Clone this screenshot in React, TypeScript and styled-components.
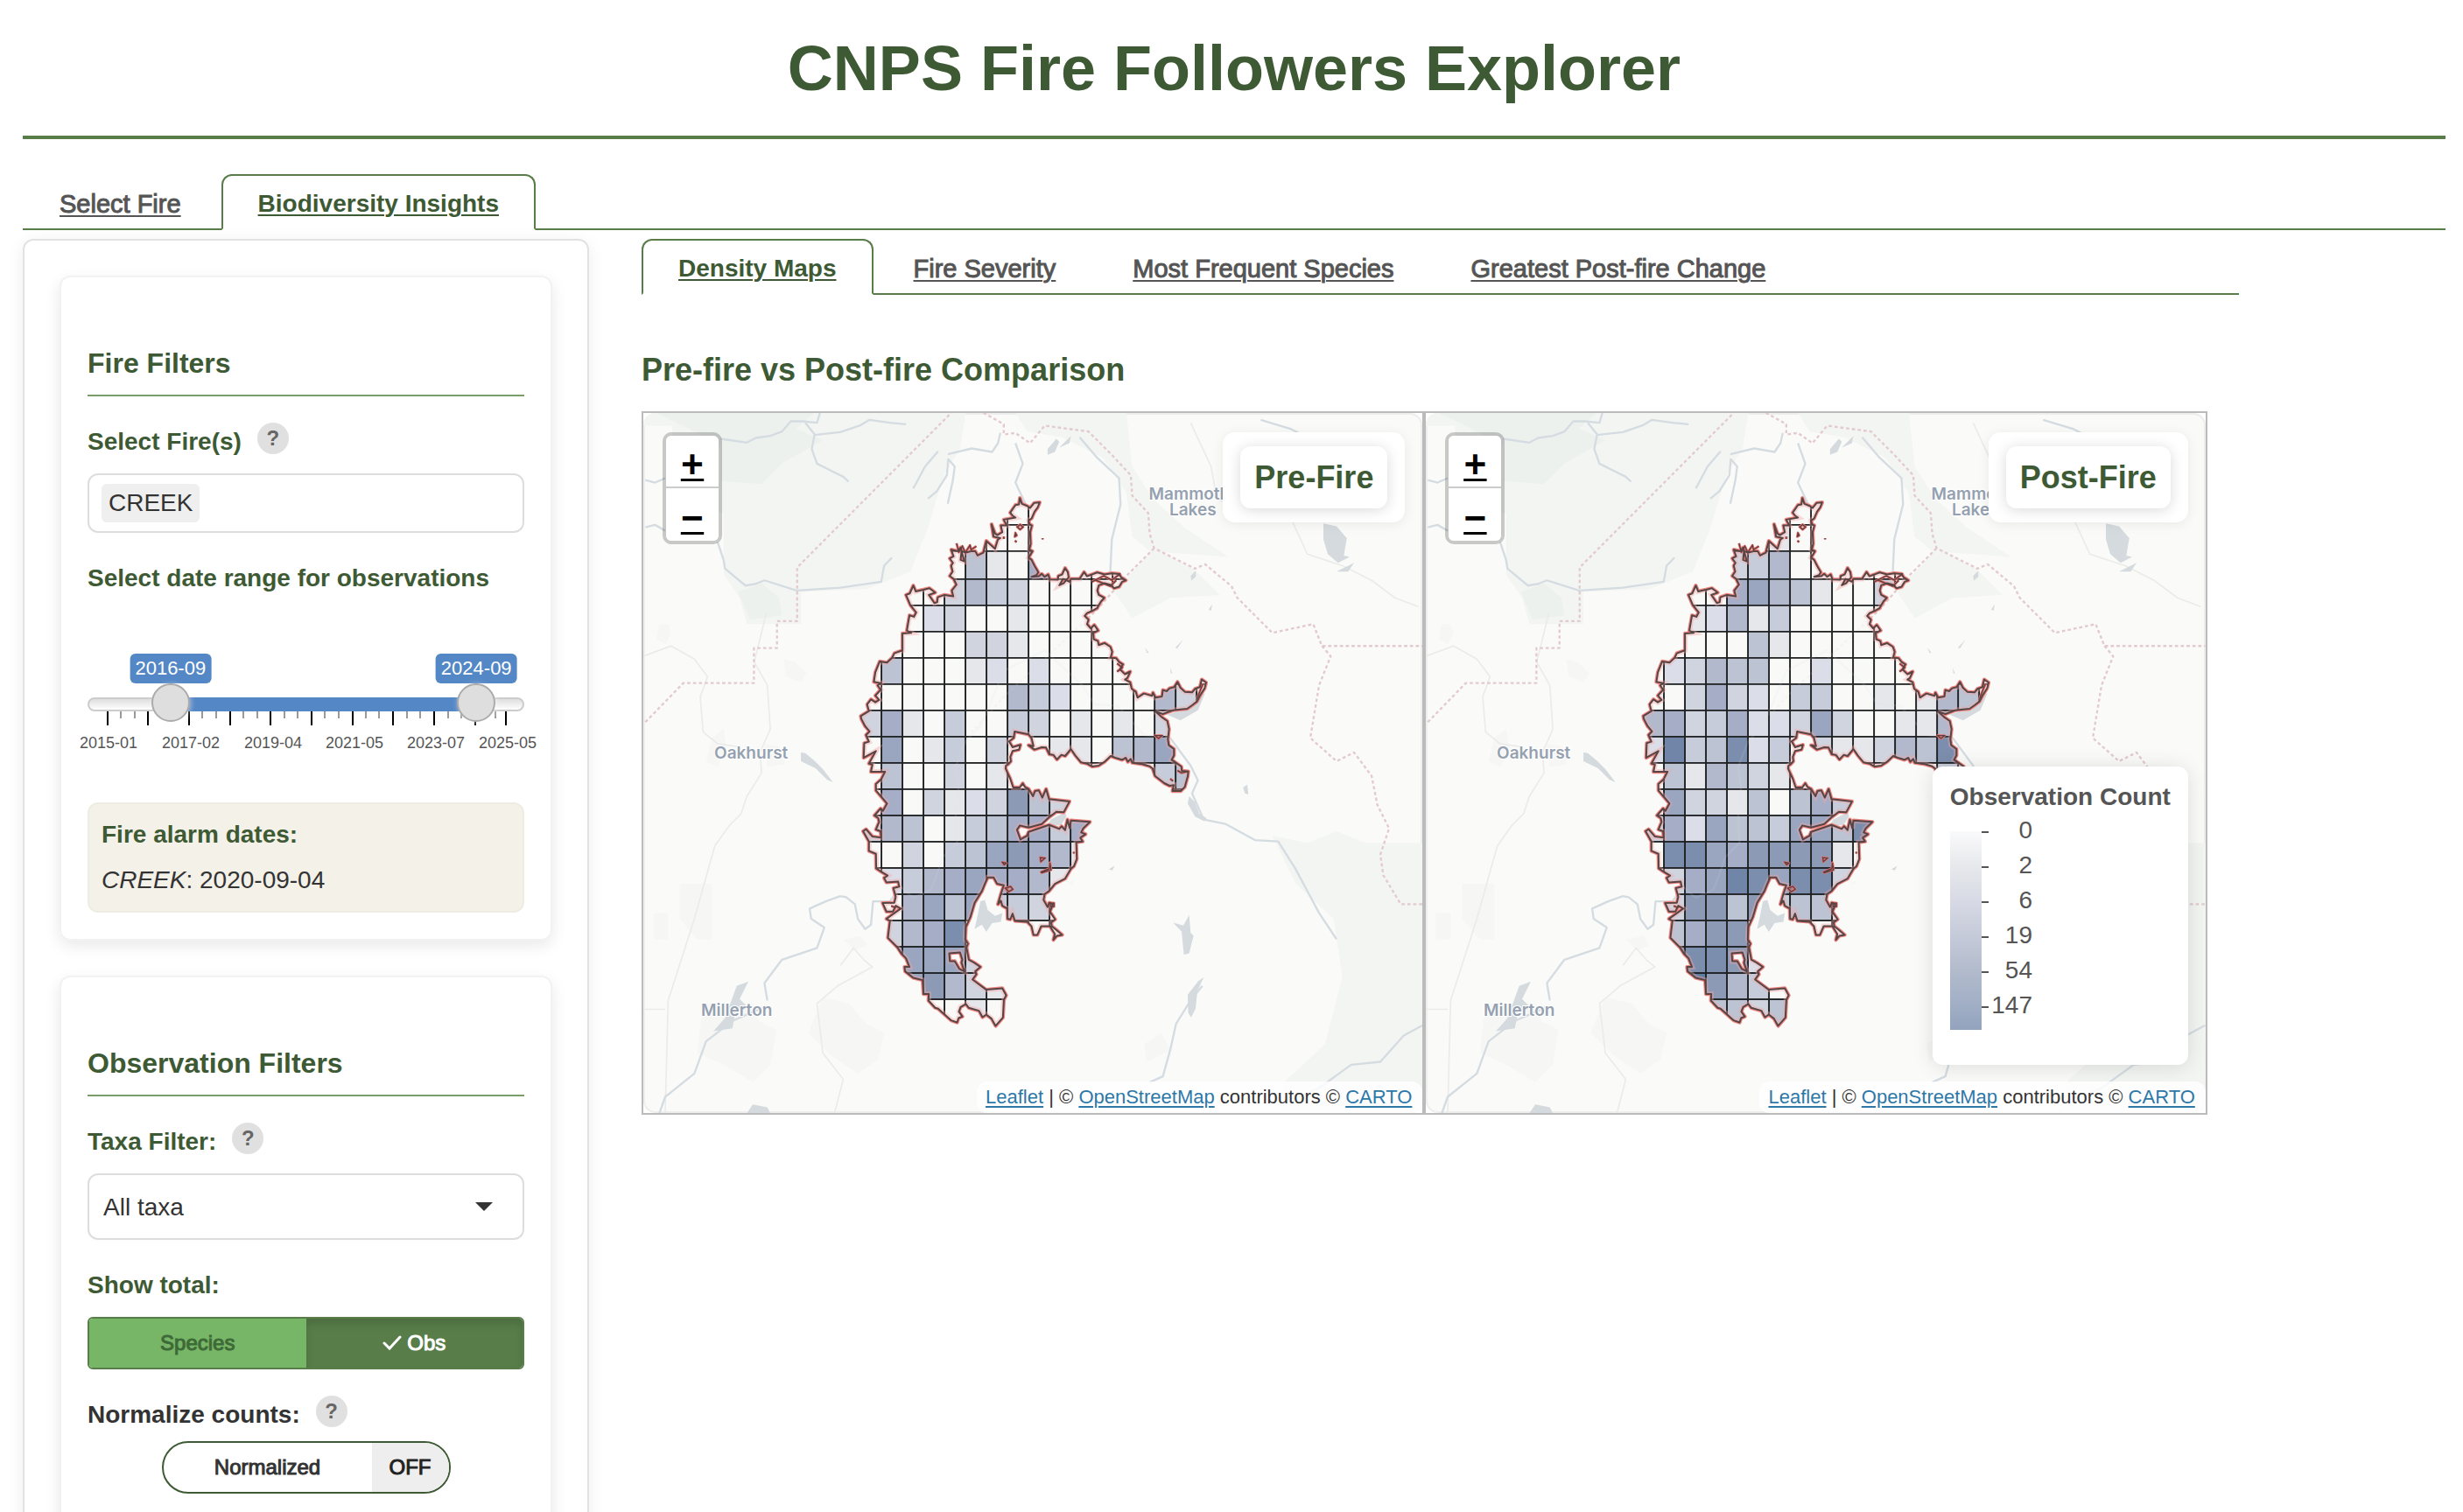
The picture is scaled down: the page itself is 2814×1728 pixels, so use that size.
import React, { useId, useState } from "react";
import styled, { createGlobalStyle } from "styled-components";

const DARK = "#3d5a34";
const MID = "#587d49";
const INK = "#333333";
const GREY = "#555555";

const GlobalStyle = createGlobalStyle`
  *, *::before, *::after { box-sizing: border-box; }
  body {
    margin: 0;
    background: #fff;
    color: ${INK};
    font-family: "Liberation Sans", Arial, Helvetica, sans-serif;
    font-size: 28px;
  }
  h1, h2, p { margin: 0; }
  button, input, select { font: inherit; color: inherit; }
`;

/* ---------- Page frame ---------- */

const Page = styled.div`
  height: 100vh;
  overflow-x: hidden;
  overflow-y: auto;
  scrollbar-width: none;
  padding: 38px 20px 0 26px;
  display: flex;
  flex-direction: column;
`;

const PageHeader = styled.header`
  flex: none;
  padding-bottom: 37px;
  border-bottom: 4px solid ${MID};
  margin-bottom: 40px;
  text-align: center;
`;

const PageTitle = styled.h1`
  font-size: 72px;
  line-height: 80px;
  color: ${DARK};
`;

const Tabs = styled.nav`
  flex: none;
  display: flex;
  gap: 4px;
  border-bottom: 2px solid ${MID};
`;

const Tab = styled.a<{ $active?: boolean }>`
  margin-bottom: -2px;
  padding: 12px 40px 8px;
  border: 2px solid ${(p) => (p.$active ? MID : "transparent")};
  border-bottom-color: ${(p) => (p.$active ? "#fff" : "transparent")};
  border-radius: 12px 12px 0 0;
  font-size: ${(p) => (p.$active ? "28px" : "29px")};
  line-height: 40px;
  font-weight: ${(p) => (p.$active ? 700 : 400)};
  -webkit-text-stroke: ${(p) => (p.$active ? "0" : "1px currentColor")};
  paint-order: stroke;
  color: ${(p) => (p.$active ? DARK : GREY)};
  text-decoration: underline;
  text-decoration-thickness: 2px;
  text-underline-offset: 3px;
  white-space: nowrap;
`;

const Columns = styled.div`
  flex: 1 0 auto;
  display: flex;
  align-items: flex-start;
  margin: 10px -30px 0;
`;

const SideColumn = styled.div`
  flex: 0 0 25%;
  min-width: 0;
  max-width: 25%;
  padding: 0 30px;
`;

const MainColumn = styled.main`
  flex: 0 0 66.6667%;
  min-width: 0;
  padding: 0 30px;
`;

/* ---------- Sidebar ---------- */

const Sidebar = styled.aside`
  padding: 40px 40px 60px;
  border: 2px solid #e2e2e2;
  border-radius: 12px;
  box-shadow: 0 4px 20px rgba(0, 0, 0, 0.07);
`;

const Card = styled.section`
  padding: 80px 30px 30px;
  border: 2px solid #f2f2f2;
  border-radius: 12px;
  box-shadow: 0 6px 18px rgba(0, 0, 0, 0.09);
  & + & { margin-top: 40px; padding-bottom: 100px; }
`;

const CardTitle = styled.h2`
  padding-bottom: 18px;
  margin-bottom: 30px;
  border-bottom: 2px solid #7a9e6b;
  font-size: 32px;
  line-height: 36px;
  color: ${DARK};
`;

const Field = styled.div`
  & + & { margin-top: 30px; }
`;

const FieldHead = styled.div<{ $tight?: boolean }>`
  display: flex;
  align-items: flex-start;
  gap: 18px;
  margin-bottom: ${(p) => (p.$tight ? "10px" : "16px")};
`;

const FieldLabel = styled.label<{ $plain?: boolean }>`
  display: block;
  padding-top: 2px;
  line-height: 40px;
  font-weight: 700;
  color: ${(p) => (p.$plain ? INK : DARK)};
`;

const Help = styled.button`
  width: 36px;
  height: 36px;
  padding: 0;
  border: 0;
  border-radius: 50%;
  background: #e0e0e0;
  color: #666;
  font-size: 24px;
  line-height: 36px;
  font-weight: 700;
`;

const TagBox = styled.div`
  display: flex;
  align-items: center;
  height: 68px;
  padding: 0 14px;
  border: 2px solid #dddddd;
  border-radius: 12px;
`;

const Tag = styled.span`
  padding: 0 8px;
  border-radius: 6px;
  background: #efefef;
  line-height: 44px;
`;

const TagInput = styled.input`
  flex: 1;
  min-width: 0;
  border: 0;
  outline: 0;
  background: none;
`;

const SelectWrap = styled.div`
  display: grid;
  align-items: center;
  > * { grid-area: 1 / 1; }
  > svg { justify-self: end; margin-right: 36px; pointer-events: none; }
`;

const Select = styled.select`
  appearance: none;
  width: 100%;
  height: 76px;
  padding: 0 16px;
  border: 2px solid #dddddd;
  border-radius: 12px;
  background: #fff;
`;

/* ---------- Date slider ---------- */

const Slider = styled.div`
  position: relative;
  margin-top: 66px;
  padding-top: 34px;
`;

const Bubble = styled.span`
  position: absolute;
  top: 0;
  transform: translateX(-50%);
  padding: 0 6px;
  border-radius: 6px;
  background: #5487c5;
  color: #fff;
  font-size: 22px;
  line-height: 34px;
  white-space: nowrap;
`;

const Rail = styled.div`
  display: grid;
  grid-template-columns: minmax(0, 1fr);
  align-items: center;
  height: 44px;
  > * { grid-area: 1 / 1; }
`;

const Track = styled.div`
  height: 16px;
  border: 2px solid #cccccc;
  border-radius: 16px;
  background: linear-gradient(#dedede, #ffffff);
  margin-top: 4px;
`;

const Span = styled.div`
  height: 16px;
  background: #5487c5;
  margin-top: 4px;
`;

const Range = styled.input`
  appearance: none;
  width: 100%;
  height: 44px;
  margin: 0;
  background: none;
  pointer-events: none;
  z-index: 1;
  &::-webkit-slider-thumb {
    appearance: none;
    width: 44px;
    height: 44px;
    border: 2px solid #ababab;
    border-radius: 50%;
    background: #dedede;
    box-shadow: 1px 1px 6px rgba(255, 255, 255, 0.5);
    pointer-events: auto;
  }
`;

const Scale = styled.svg`
  display: block;
  width: 100%;
  height: 48px;
  margin-top: -12px;
  margin-bottom: 56px;
  overflow: visible;
  text { font-size: 18px; fill: ${GREY}; text-anchor: middle; }
`;

const AlarmBox = styled.div`
  display: flex;
  flex-direction: column;
  gap: 12px;
  padding: 15px 14px;
  border: 2px solid #efece2;
  border-radius: 12px;
  background: #f4f1e9;
  line-height: 40px;
  strong { color: ${DARK}; }
`;

/* ---------- Buttons ---------- */

const Segments = styled.div`
  display: flex;
  height: 60px;
  border: 2px solid ${MID};
  border-radius: 6px;
  overflow: hidden;
`;

const Segment = styled.label<{ $on?: boolean }>`
  flex: 1;
  display: flex;
  align-items: center;
  justify-content: center;
  gap: 6px;
  font-size: 24px;
  -webkit-text-stroke: 1px currentColor;
  background: ${(p) => (p.$on ? MID : "#78b667")};
  color: ${(p) => (p.$on ? "#fff" : "#3d6a36")};
  box-shadow: ${(p) => (p.$on ? "inset 0 6px 10px rgba(0, 0, 0, 0.13)" : "none")};
  input { position: absolute; opacity: 0; }
`;

const Toggle = styled.label`
  display: flex;
  width: 330px;
  height: 60px;
  margin: 0 auto;
  border: 2px solid ${DARK};
  border-radius: 30px;
  overflow: hidden;
  font-size: 24px;
  line-height: 56px;
  text-align: center;
  -webkit-text-stroke: 1px currentColor;
  input { position: absolute; opacity: 0; }
`;

const ToggleName = styled.span`
  flex: 1;
`;

const ToggleState = styled.span`
  width: 88px;
  background: #eeeeee;
  color: #222;
`;

/* ---------- Maps ---------- */

const SectionTitle = styled.h2`
  margin: 66px 0 27px;
  font-size: 36px;
  line-height: 40px;
  color: ${DARK};
`;

const MapPair = styled.div`
  display: flex;
`;

const MapFrame = styled.div`
  flex: 0 0 49%;
  height: 804px;
  border: 2px solid #bbbbbb;
`;

const MapCanvas = styled.div`
  position: relative;
  height: 100%;
  border-radius: 14px;
  overflow: hidden;
  background: #fafaf8;
  box-shadow: inset 0 0 0 2px #eeeeee;
`;

const MapSvg = styled.svg`
  display: block;
  width: 100%;
  height: 100%;
`;

const ZoomBar = styled.div`
  position: absolute;
  top: 22px;
  left: 22px;
  width: 68px;
  border: 4px solid rgba(0, 0, 0, 0.2);
  border-radius: 10px;
  background-clip: padding-box;
  overflow: hidden;
`;

const ZoomButton = styled.button`
  display: block;
  width: 60px;
  height: 60px;
  padding: 14px 0 0;
  border: 0;
  background: #fff;
  color: #000;
  font-family: "Liberation Mono", monospace;
  font-size: 44px;
  line-height: 44px;
  font-weight: 700;
  text-decoration: underline;
  text-decoration-thickness: 3px;
  text-underline-offset: 1px;
  text-decoration-skip-ink: none;
  &:first-child { border-bottom: 2px solid #cccccc; }
`;

const Badge = styled.div`
  position: absolute;
  top: 22px;
  right: 20px;
  padding: 16px 20px;
  border-radius: 14px;
  background: #fff;
  box-shadow: 0 2px 14px rgba(0, 0, 0, 0.07);
`;

const BadgeText = styled.div`
  padding: 16px;
  border-radius: 12px;
  background: #fff;
  box-shadow: 0 2px 16px rgba(0, 0, 0, 0.15);
  font-size: 36px;
  line-height: 39px;
  font-weight: 700;
  color: ${DARK};
`;

const Legend = styled.div`
  position: absolute;
  right: 20px;
  bottom: 55px;
  padding: 18px 20px 34px;
  border-radius: 12px;
  background: #fff;
  box-shadow: 0 2px 24px rgba(0, 0, 0, 0.12);
  color: ${GREY};
  strong { display: block; line-height: 34px; }
  svg { display: block; overflow: visible; }
  text { font-size: 28px; fill: ${GREY}; text-anchor: end; }
`;

const Attribution = styled.div`
  position: absolute;
  right: 0;
  bottom: 0;
  padding: 0 12px 0 10px;
  border-radius: 12px;
  background: rgba(255, 255, 255, 0.8);
  font-size: 22px;
  line-height: 36px;
  a { color: #2e78a8; text-underline-offset: 3px; }
`;

/* Shades of the density ramp, lowest first. */
const RAMP: Record<string, string> = {
  "0": "#f9f9f7", "1": "#e6e7eb", "2": "#dbdee8", "3": "#d0d4df",
  "4": "#c6ccd9", "5": "#bcc3d2", "6": "#b2b9cd", "7": "#a5afc6",
  "8": "#9aa5c0", "9": "#8c9ab7", A: "#7d8fae", B: "#7086a8", C: "#5f7fa0",
};

/* One string per grid row, one character per column. */
const PRE_ROWS = [
  "00000000000000000", "00000000000000000", "00000510700000000", "00003643000000000",
  "00023001000000000", "00000331000000000", "05000120200000000", "00000006420000630",
  "37104004301010300", "08014030011056800", "05003010000000450", "07031239530000000",
  "36501457747000000", "00304589761000000", "02467877610000000", "00685844300000000",
  "0367A000000000000", "08888300000000000", "08896310000000000", "00000100000000000",
];
const POST_ROWS = [
  "00000000000000000", "00000010000000000", "00003460000000000", "00007865100300000",
  "00126140000000000", "00000510000000000", "02365500200000000", "00373204400101650",
  "67347223830011600", "2B45A240311365A00", "05165310000000450", "08331505740000000",
  "3728554885A000000", "0AA87999910000000", "0378BA8AA30000000", "03995945510000000",
  "05799000000000000", "0AAA9200000000000", "0AC96400000000000", "00055350000000000",
];

const rowY = (n: number) => (n < 3 ? [60, 150, 240][n] : 336 + 90 * (n - 3));
const colX = (k: number) => 141 + 72 * (k - 1);

const PERIMETER =
  "M615 58L622 78 640 85 650 92 664 75 683 73 676 90 665 105 655 128 645 135 648 148 656 152 650 175 652 215 647 235 658 240 645 262 655 270 665 290 678 312 672 322 655 328 680 326 690 318 700 328 712 320 718 337 745 338 747 325 760 320 770 298 779 312 782 330 765 350 750 357 763 335 785 345 790 335 820 335 835 312 845 326 862 320 880 313 905 320 930 316 955 318 962 330 978 340 965 345 955 362 938 367 925 355 905 350 885 357 880 375 885 390 904 400 893 412 884 427 880 435 862 445 845 452 837 462 850 475 845 490 858 505 870 493 883 512 866 520 868 542 882 548 885 562 905 555 925 568 931 585 926 605 945 607 955 620 968 628 958 645 975 662 993 653 983 675 975 680 993 690 998 712 1012 722 1018 742 1040 728 1068 736 1071 725 1080 742 1102 738 1105 716 1118 720 1128 710 1144 706 1155 688 1165 708 1180 722 1205 724 1215 712 1232 706 1238 680 1253 690 1248 710 1232 735 1222 755 1205 768 1188 780 1165 782 1140 785 1105 798 1080 790 1100 808 1120 822 1126 850 1122 885 1125 905 1143 918 1143 940 1135 955 1145 962 1168 978 1170 993 1192 995 1190 1012 1180 1048 1166 1062 1138 1062 1142 1042 1128 1044 1110 1035 1078 1010 1070 985 1060 977 1035 970 1000 965 995 952 985 962 978 948 965 955 942 948 926 942 905 962 885 975 862 978 845 968 825 964 805 940 790 918 770 942 757 938 742 954 730 938 716 936 705 913 690 912 665 920 645 905 662 908 655 880 645 868 597 858 594 880 578 892 590 912 617 904 612 920 590 925 582 945 584 960 575 970 567 975 566 985 575 1005 582 1020 592 1050 615 1050 625 1036 632 1048 645 1055 660 1080 667 1062 680 1060 692 1085 705 1055 715 1090 785 1098 765 1135 740 1133 715 1152 690 1175 645 1187 615 1180 605 1195 617 1228 640 1215 645 1202 715 1178 750 1192 758 1183 770 1196 778 1160 786 1190 790 1163 855 1168 832 1190 825 1204 840 1210 822 1222 830 1235 808 1238 810 1295 800 1320 790 1328 770 1362 735 1380 715 1405 700 1415 696 1435 710 1460 716 1445 728 1450 718 1476 736 1502 722 1512 724 1525 740 1538 760 1555 742 1558 730 1572 735 1552 718 1525 688 1525 675 1555 662 1555 655 1525 640 1510 598 1507 590 1482 582 1502 573 1500 572 1465 555 1455 550 1438 540 1450 550 1415 560 1385 537 1380 525 1358 505 1358 495 1380 485 1405 460 1445 445 1495 430 1528 428 1570 437 1585 432 1598 440 1640 458 1650 480 1665 462 1680 466 1690 453 1708 500 1743 555 1738 568 1762 560 1778 557 1838 532 1867 518 1842 500 1828 487 1837 475 1815 440 1805 430 1792 412 1802 406 1818 418 1835 405 1840 400 1855 380 1848 335 1808 325 1805 302 1780 303 1758 285 1758 282 1710 250 1702 222 1680 220 1665 237 1665 225 1635 210 1620 195 1597 163 1565 170 1507 158 1500 207 1465 190 1455 180 1475 158 1475 145 1446 185 1445 190 1425 182 1395 202 1390 198 1372 158 1375 150 1360 162 1352 142 1340 123 1327 122 1277 98 1267 98 1235 78 1200 88 1193 110 1218 140 1222 138 1200 122 1194 133 1168 130 1155 117 1146 138 1122 146 1130 160 1105 122 1060 122 1038 140 1022 153 996 105 996 110 972 98 968 122 925 80 948 82 898 98 893 88 870 100 858 85 840 72 815 70 805 98 788 92 765 105 748 120 758 133 750 120 735 138 715 128 700 138 692 115 688 120 655 135 618 160 622 178 605 185 590 213 580 213 522 243 520 228 512 237 460 252 465 260 450 240 425 225 390 238 385 250 358 258 378 285 372 305 367 325 382 303 390 322 418 332 415 334 398 357 390 387 395 382 375 398 355 388 335 375 325 385 310 380 290 386 280 375 265 388 258 380 235 402 240 412 228 425 275 412 270 415 240 430 245 450 240 462 240 470 255 490 245 500 205 530 232 540 200 548 195 525 190 518 148 530 180 538 185 555 175 550 152 570 152 560 132 600 125 590 118 582 108 600 82 612 80Z" +
  "M373 1618L410 1615 418 1640 415 1650 425 1680 408 1672 392 1645 375 1645Z";

const FLECKS =
  "M693 195v5M600 178l4 8-6 4zM598 204l6 5M606 157l10-8 10 8-10 9zM560 190v8M398 213l8 30 12-20 10 22 16-25 4 15 18-12M720 1446h12v12h-12zM685 1290l16 2-14 12zM555 1306l14 3-8 6zM688 1340l28-12 2-20 4 24-32 10zM565 1395l18-6 8 10-14 8zM1078 872l24 0-12 10zM1155 992l14 8 24-6M1130 1020l10 8M862 345l40-20 28 14 30-22M875 340l50 20 20-20M948 625l18 14-18 14M978 660l14-8M190 1462l-16-6M800 1270v6M1222 745l20-50";

const GREENS = [
  "M-675-234H430L410-110 360-30 330 60 300 160 240 310 90 370-60 376-135 380V490H-320L-345 400-400 320V110L-575 60V-190H-675Z",
  "M600-234H980L1000-50 1070 60 1180 160 1330 260 1060 240 1000 190 980 40 900-80 760-150 640-170Z",
  "M940 380L1075 230 1210 300 1300 390 1130 400 1000 470Z",
  "M1480 1215L1600 1240 1700 1200 1800 1240H1995V2166H1500L1520 2060 1660 1930 1720 1700 1690 1500 1560 1380Z",
];

const DEEP_GREENS = [
  "M-630-234H-90L-150-180-60-140-200-60-270 10-410 0V-120L-520-180Z",
  "M-350 380L-270 350-210 400-200 460-310 475Z",
];

const HAZE =
  "M-620 490h30l10 30-20 40-30-20zM-195 610l40 10 40 40-20 30-50-20zM-440 880l40-30 10 60-30 70-40-20zM-260 900l50 10 20 60-60 10zM-550 1380h110v190h-50l-60-70zM-470 1790h170l20 60 60 30-20 120-60 60-100-60-90-40zM-60 1770l90 20 60 70 60 30-20 90-70 50-90-60-80-80zM-640 1480h50v90h-50zM10 1570l60-10 20 30-40 20zM780 1380l20-15-6 16zM1040 1930l60-40 30 60-80 40z";

const RIVERS = [
  "M-410-145L-320-132-290-148-240-155-200-170-170-205-130-205-80-200-70-234M-120-200L-88-160-98-110-80-60-30-35 10-15 28 2M-90-158L0-168 70-192 100-210 170-200 225-195",
  "M-420 210L-400 270-395 300-325 358-290 352-260 340-150 375 0 365 140 345 150 290 177 262",
  "M368-92L450-112 520-100 540-130 548-165M335-102L290-50 250 25M370-78L365-20 330 35 300 60M370-75L392-50 385 0 368 78M600-130L625-60 600 5 635 80",
  "M-668-4L-635 5-600-10M-668 158L-635 150-600 170",
  "M820-150L880-80 955-10 960 80 930 200 925 310M1440-210L1540-180 1580-160",
  "M0 1422L20 1426 50 1450 60 1500 85 1535 105 1520 112 1440 170 1440 205 1390 250 1428 310 1400 330 1350 350 1290 400 1240 395 1140 405 1050 395 980 430 890 480 840 560 650 700 580 830 700 870 765 950 770 1040 870 1130 880 1200 975 1225 1025 1205 1070 1245 1160 1320 1175 1420 1230 1500 1235 1560 1330 1640 1480 1700 1570M0 1422L-50 1440-105 1465-100 1500-55 1530-80 1600-200 1640-260 1720-250 1780",
  "M-255 1800L-370 1850-460 1920-500 2030-600 2110-620 2166",
  "M1240 1730L1200 1780 1150 1860 1130 1950 1105 2040 1060 2060M1995 1865L1930 1900 1850 1990 1750 2000 1640 2080 1570 2110",
];

const LAKES =
  "M-135 930l15 2 30 25 30 30 35 45-20-8-40-40-50-24zM1195 1080l20 20 15 40 25 15-10 10-30-15-25-45zM480 1440l15-5 10 35 25 20 25-10-5 30-30 5-20 30-15-25-25 15 10-45zM720 1160l50-25 5 15-20 30-45 0zM1140 1513l35 10 20-35 5 60 10 10-15 60-18 5-8-80zM1190 1760l35-45 20-15-22 48-6 60-15 30-10-15zM1655 145l45 10 35 40-10 60 20 5-40 20-35-30-15-50zM1120 800l60-20 70-55-25 60-60 35zM-395 1840l40-110 40-15-30 60 30 30-45 20-10 50-65 10zM-320 2166l20-30 50 10 10 20zM710-110l30-35 10 10-15 35-25 10zM750-115l40-40-5 25zM1200 325l18-18v20l-15 14zM1262 440l12-18-4 22zM1043 570l14 18-6 2zM1148 570l26-26-20 30zM1380 1050l14-10 4 34-12-4zM1130 640l8 20-6-2zM920 1330l20-12-8 16zM1700 310l60-30-20 30z";

const ROADS =
  "M-675 600L-580 565-500 610-455 670-480 740-470 860-420 900-350 910M-253 450L-280 560-295 620-250 700-240 850-275 930-270 1000-320 1080-340 1140-380 1180-430 1250-500 1500-590 1780-600 2166M-600 1810H-675M1200-200L1270-50 1290 60 1350 90 1540 120 1600 250 1720 290 1820 340 1900 400 1980 430M0 1660L45 1600 80 1640 110 1665-10 1730-80 1790-60 1960 10 2050-20 2166";

const BOUNDARIES = [
  "M-668 826L-538 692H-296V572H-217V480H-148V296L380-234",
  "M490-234L560-195 560-160 600-165 650-130 700-190 850-170 930-90 995-20 1000 50 1055 110 1060 180 1075 230 1215 300 1250 285 1340 360 1360 400 1440 480 1480 520 1620 490 1650 565H1995M1650 565L1680 600 1640 700 1610 880 1700 960 1760 930 1820 1010 1840 1110 1880 1190 1850 1280 1860 1350 1920 1450H1995",
  "M1075 230L980 325 880 440 720 590 560 740 450 860",
];

function Basemap() {
  return (
    <g fill="none" strokeLinejoin="round">
      <g fill="#f3f5f2">{GREENS.map((d) => <path key={d} d={d} />)}</g>
      <g fill="#edf1ee">{DEEP_GREENS.map((d) => <path key={d} d={d} />)}</g>
      <path d={HAZE} fill="#f6f6f4" />
      <path d={ROADS} stroke="#ebebea" strokeWidth="5" />
      <g stroke="#d4dce1" strokeWidth="7">{RIVERS.map((d) => <path key={d} d={d} />)}</g>
      <path d={LAKES} fill="#d4dadd" />
      <g stroke="#e2cacd" strokeWidth="7" strokeDasharray="11 9">
        {BOUNDARIES.map((d) => <path key={d} d={d} />)}
      </g>
    </g>
  );
}

const PlaceName = styled.text`
  font-family: Inter, "Open Sans", sans-serif;
  font-size: 57px;
  font-weight: 600;
  fill: #95a1b0;
  stroke: #ffffff;
  stroke-width: 6px;
  paint-order: stroke;
`;

function FireMap({ rows }: { rows: string[] }) {
  const clip = useId();
  return (
    <MapSvg viewBox="-675 -234 2670 2400" preserveAspectRatio="xMidYMid slice" role="img" aria-label="Observation density inside the fire perimeter">
      <Basemap />
      <PlaceName x="1057" y="62">Mammoth</PlaceName>
      <PlaceName x="1127" y="116">Lakes</PlaceName>
      <PlaceName x="-432" y="951">Oakhurst</PlaceName>
      <PlaceName x="-477" y="1833">Millerton</PlaceName>
      <clipPath id={clip}>
        <path d={PERIMETER} clipRule="evenodd" />
      </clipPath>
      <path d={PERIMETER} fill="none" stroke="#f08580" strokeWidth="13" strokeLinejoin="round" />
      <g clipPath={`url(#${clip})`}>
        {rows.map((row, r) =>
          row.split("").map((v, c) => (
            <rect
              key={`${r}-${c}`}
              x={colX(c)}
              y={rowY(r)}
              width={72}
              height={rowY(r + 1) - rowY(r)}
              fill={RAMP[v]}
              stroke="#1f2122"
              strokeWidth="5"
            />
          ))
        )}
        <g opacity="0.12"><Basemap /></g>
        <path d={PERIMETER} fill="none" stroke="#f4a6a6" strokeOpacity="0.4" strokeWidth="18" />
      </g>
      <path d={FLECKS} fill="none" stroke="#e8716d" strokeWidth="9" strokeLinejoin="round" />
      <path d={FLECKS} fill="none" stroke="#5c4041" strokeWidth="4" />
      <path d={PERIMETER} fill="none" stroke="#574545" strokeWidth="6" strokeLinejoin="round" />
    </MapSvg>
  );
}

const LEGEND_STEPS = ["0", "2", "6", "19", "54", "147"];

function CountLegend() {
  return (
    <Legend>
      <strong>Observation Count</strong>
      <svg width="252" height="255" viewBox="0 0 252 255" role="img" aria-label="Colour scale">
        <defs>
          <linearGradient id="ramp" x1="0" y1="0" x2="0" y2="1">
            <stop offset="0" stopColor="#fafafb" />
            <stop offset="0.18" stopColor="#e7e8ec" />
            <stop offset="0.35" stopColor="#d7dae5" />
            <stop offset="0.53" stopColor="#c5cad9" />
            <stop offset="0.7" stopColor="#b2bbcc" />
            <stop offset="0.88" stopColor="#a0aec5" />
            <stop offset="1" stopColor="#92a3be" />
          </linearGradient>
        </defs>
        <rect x="0" y="22" width="36" height="227" fill="url(#ramp)" />
        {LEGEND_STEPS.map((step, i) => (
          <g key={step}>
            <rect x="36" y={22 + 40 * i} width="8" height="2" fill={GREY} />
            <text x="94" y={30 + 40 * i}>{step}</text>
          </g>
        ))}
      </svg>
    </Legend>
  );
}

function MapPanel({ name, rows, legend }: { name: string; rows: string[]; legend?: boolean }) {
  return (
    <MapFrame>
      <MapCanvas>
        <FireMap rows={rows} />
        <ZoomBar>
          <ZoomButton type="button" title="Zoom in">+</ZoomButton>
          <ZoomButton type="button" title="Zoom out">−</ZoomButton>
        </ZoomBar>
        <Badge><BadgeText>{name}</BadgeText></Badge>
        {legend && <CountLegend />}
        <Attribution>
          <a href="#leaflet">Leaflet</a> | © <a href="#osm">OpenStreetMap</a> contributors © <a href="#carto">CARTO</a>
        </Attribution>
      </MapCanvas>
    </MapFrame>
  );
}

/* ---------- Date range: months counted from 2015-01 ---------- */

const MAX_MONTH = 125;
const monthName = (m: number) => `${2015 + Math.floor(m / 12)}-${String((m % 12) + 1).padStart(2, "0")}`;
const thumbAt = (m: number) => `calc(22px + (100% - 44px) * ${m / MAX_MONTH})`;

const MAJOR = [23, 69, 116, 163, 209, 256, 303, 349, 396, 443, 478];
const MINOR = [38, 54, 85, 101, 131, 147, 178, 194, 225, 240, 271, 287, 318, 333, 365, 380, 412, 427, 455, 466];
const SCALE_LABELS: [number, string][] = [
  [24, "2015-01"], [118, "2017-02"], [212, "2019-04"], [305, "2021-05"], [398, "2023-07"], [480, "2025-05"],
];

function DateSlider() {
  const [from, setFrom] = useState(20);
  const [to, setTo] = useState(116);
  return (
    <Slider>
      <Bubble style={{ left: thumbAt(from) }}>{monthName(from)}</Bubble>
      <Bubble style={{ left: thumbAt(to) }}>{monthName(to)}</Bubble>
      <Rail>
        <Track />
        <Span style={{ marginLeft: thumbAt(from), marginRight: `calc(100% - (${thumbAt(to)}))` }} />
        <Range id="from" type="range" min={0} max={MAX_MONTH} value={from} onChange={(e) => setFrom(Math.min(+e.target.value, to))} />
        <Range aria-label="End of date range" type="range" min={0} max={MAX_MONTH} value={to} onChange={(e) => setTo(Math.max(+e.target.value, from))} />
      </Rail>
      <Scale viewBox="0 0 499 48" aria-hidden="true">
        {MINOR.map((x) => <rect key={x} x={x - 1} y="0" width="2" height="8" fill="#999" />)}
        {MAJOR.map((x) => <rect key={x} x={x - 1} y="0" width="2" height="16" fill="#000" />)}
        {SCALE_LABELS.map(([x, t]) => <text key={t} x={x} y="42">{t}</text>)}
      </Scale>
    </Slider>
  );
}

function FilterPanel() {
  const [total, setTotal] = useState("Obs");
  return (
    <Sidebar>
      <Card>
        <CardTitle>Fire Filters</CardTitle>
        <Field>
          <FieldHead>
            <FieldLabel htmlFor="fires">Select Fire(s)</FieldLabel>
            <Help type="button">?</Help>
          </FieldHead>
          <TagBox>
            <Tag>CREEK</Tag>
            <TagInput id="fires" type="text" />
          </TagBox>
        </Field>
        <Field>
          <FieldLabel htmlFor="from">Select date range for observations</FieldLabel>
          <DateSlider />
        </Field>
        <AlarmBox>
          <strong>Fire alarm dates:</strong>
          <p><em>CREEK</em>: 2020-09-04</p>
        </AlarmBox>
      </Card>
      <Card>
        <CardTitle>Observation Filters</CardTitle>
        <Field>
          <FieldHead>
            <FieldLabel htmlFor="taxa">Taxa Filter:</FieldLabel>
            <Help type="button">?</Help>
          </FieldHead>
          <SelectWrap>
            <Select id="taxa"><option>All taxa</option></Select>
            <svg width="20" height="10" viewBox="0 0 20 10" aria-hidden="true">
              <path d="M0 0h20L10 10z" fill="#333" />
            </svg>
          </SelectWrap>
        </Field>
        <Field>
          <FieldHead><FieldLabel as="span" id="total">Show total:</FieldLabel></FieldHead>
          <Segments role="radiogroup" aria-labelledby="total">
            {["Species", "Obs"].map((name) => (
              <Segment key={name} $on={total === name}>
                <input type="radio" name="total" checked={total === name} onChange={() => setTotal(name)} />
                {total === name && (
                  <svg width="22" height="18" viewBox="0 0 22 18" aria-hidden="true">
                    <path d="M2 9l6 6L20 2" fill="none" stroke="#fff" strokeWidth="3" strokeLinecap="round" />
                  </svg>
                )}
                {name}
              </Segment>
            ))}
          </Segments>
        </Field>
        <Field>
          <FieldHead $tight>
            <FieldLabel $plain htmlFor="normalize">Normalize counts:</FieldLabel>
            <Help type="button">?</Help>
          </FieldHead>
          <Toggle>
            <input id="normalize" type="checkbox" />
            <ToggleName>Normalized</ToggleName>
            <ToggleState>OFF</ToggleState>
          </Toggle>
        </Field>
      </Card>
    </Sidebar>
  );
}

export default function App() {
  return (
    <>
      <GlobalStyle />
      <Page>
        <PageHeader><PageTitle>CNPS Fire Followers Explorer</PageTitle></PageHeader>
        <Tabs>
          <Tab href="#select">Select Fire</Tab>
          <Tab href="#insights" $active>Biodiversity Insights</Tab>
        </Tabs>
        <Columns>
          <SideColumn><FilterPanel /></SideColumn>
          <MainColumn>
            <Tabs>
              <Tab href="#density" $active>Density Maps</Tab>
              <Tab href="#severity">Fire Severity</Tab>
              <Tab href="#frequent">Most Frequent Species</Tab>
              <Tab href="#change">Greatest Post-fire Change</Tab>
            </Tabs>
            <SectionTitle>Pre-fire vs Post-fire Comparison</SectionTitle>
            <MapPair>
              <MapPanel name="Pre-Fire" rows={PRE_ROWS} />
              <MapPanel name="Post-Fire" rows={POST_ROWS} legend />
            </MapPair>
          </MainColumn>
        </Columns>
      </Page>
    </>
  );
}
